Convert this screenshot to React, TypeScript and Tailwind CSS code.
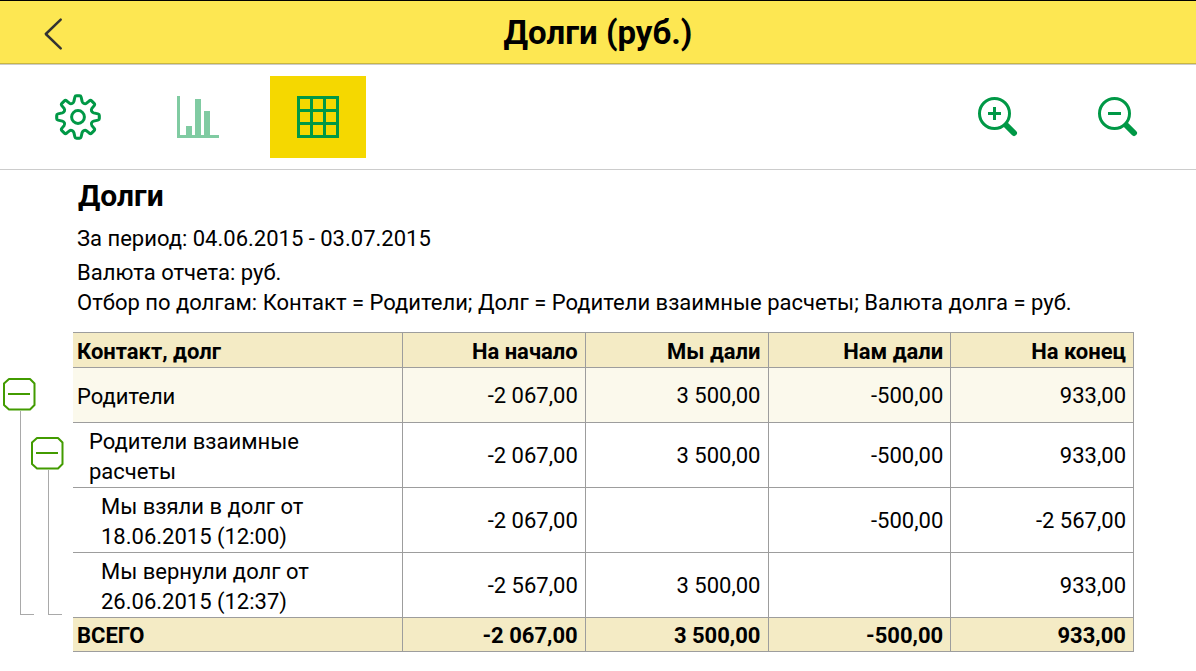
import { useState } from 'react';

type Row = {
  name: string;
  values: string[];
  indent: string;
  height: string;
  background: string;
};

const columns = ['На начало', 'Мы дали', 'Нам дали', 'На конец'];

const rows: Row[] = [
  {
    name: 'Родители',
    values: ['-2 067,00', '3 500,00', '-500,00', '933,00'],
    indent: 'pl-1',
    height: 'h-[55px]',
    background: 'bg-[#fbf9ec]',
  },
  {
    name: 'Родители взаимные расчеты',
    values: ['-2 067,00', '3 500,00', '-500,00', '933,00'],
    indent: 'pl-4 pr-20',
    height: 'h-[65px]',
    background: 'bg-white',
  },
  {
    name: 'Мы взяли в долг от 18.06.2015 (12:00)',
    values: ['-2 067,00', '', '-500,00', '-2 567,00'],
    indent: 'pl-7 pr-20',
    height: 'h-[65px]',
    background: 'bg-white',
  },
  {
    name: 'Мы вернули долг от 26.06.2015 (12:37)',
    values: ['-2 567,00', '3 500,00', '', '933,00'],
    indent: 'pl-7 pr-20',
    height: 'h-[65px]',
    background: 'bg-white',
  },
];

const totals = ['-2 067,00', '3 500,00', '-500,00', '933,00'];

function GearIcon() {
  return (
    <svg width="46" height="46" viewBox="0 0 46 46" fill="none" stroke="#009846" strokeWidth="3" strokeLinejoin="round">
      <circle cx="23" cy="23" r="6.4" />
      {[0, 90, 180, 270].map((angle) => (
        <path
          key={angle}
          transform={`rotate(${angle} 23 23)`}
          d="M23.2 1.7H21.3Q20.2 1.7 19.9 3L18.9 7.4Q18.5 8.8 17.2 9.4Q15.6 10 14.4 9.1L11.6 6.8Q10.4 5.9 9.4 6.9L6.9 9.4Q5.9 10.4 6.8 11.6L9.1 14.4Q10 15.6 9.4 17.2Q8.8 18.5 7.4 18.9L3 19.9Q1.7 20.2 1.7 21.3V23.2"
        />
      ))}
    </svg>
  );
}

function ChartIcon() {
  return (
    <svg width="42" height="42" viewBox="0 0 42 42" fill="#80cba2">
      <path d="M0 0H3V39H9V30H15V39H18V3H24V39H27V15H33V39H42V42H0Z" />
    </svg>
  );
}

function GridIcon() {
  return (
    <svg width="42" height="42" viewBox="0 0 42 42" fill="#009846">
      <path
        fillRule="evenodd"
        d="M0 0H42V42H0ZM3 3V13H13V3ZM16 3V13H26V3ZM29 3V13H39V3ZM3 16V26H13V16ZM16 16V26H26V16ZM29 16V26H39V16ZM3 29V39H13V29ZM16 29V39H26V29ZM29 29V39H39V29Z"
      />
    </svg>
  );
}

function ZoomIcon({ plus }: { plus?: boolean }) {
  return (
    <svg width="40" height="40" viewBox="0 0 40 40" fill="none" stroke="#009846">
      <circle cx="16.5" cy="16.5" r="15" strokeWidth="3" />
      <path d="M28.5 28.5L36 36" strokeWidth="6" strokeLinecap="round" />
      <path d={plus ? 'M10 16.5H23M16.5 10V23' : 'M10 16.5H23'} strokeWidth="3" />
    </svg>
  );
}

function Branch({ label, className }: { label: string; className: string }) {
  return (
    <div className={`flex w-7 flex-col ${className}`}>
      <button type="button" aria-label={label} className="size-[33px] shrink-0">
        <svg width="33" height="33" viewBox="0 0 33 33" fill="none" stroke="#429b00" strokeWidth="2">
          <path d="M6 1H27L31.5 5.5V27L27 31.5H6L1 27V5.5Z" strokeLinejoin="round" />
          <path d="M5 16H27" />
        </svg>
      </button>
      <div className="ml-[17px] w-[14px] grow border-b border-l border-[#a9a9a9]" />
    </div>
  );
}

export default function App() {
  const [view, setView] = useState('table');
  const tool = 'flex h-[82px] w-24 items-center justify-center';
  const cell = 'border-r border-b border-[#9d9d9d] pr-[7px] text-right';
  const head = 'border-t border-r border-b border-[#9d9d9d] bg-[#f4ebc5] font-bold';

  return (
    <div className="min-h-screen bg-white font-['Roboto','Noto_Sans',sans-serif] text-black">
      <header className="flex h-16 items-center border-t border-b border-t-black border-b-[#c9b641] bg-[#fde752]">
        <button type="button" aria-label="Назад" className="flex h-full w-24 items-center pt-1 pl-11">
          <svg width="19" height="34" viewBox="0 0 19 34" fill="none" stroke="#333" strokeWidth="2.5" strokeLinecap="round" strokeLinejoin="round">
            <path d="M16.7 2.7L1.8 17L16.7 31.3" />
          </svg>
        </button>
        <h1 className="grow pt-[2px] text-center text-[33px] leading-10 font-bold">Долги (руб.)</h1>
        <div className="w-24" />
      </header>

      <nav className="flex items-center gap-6 border-t border-b border-[#cccccc] px-[30px] pt-[11px] pb-[11px]">
        <button type="button" aria-label="Настройки" className={tool}>
          <GearIcon />
        </button>
        <button
          type="button"
          aria-label="Диаграмма"
          onClick={() => setView('chart')}
          className={`${tool} ${view === 'chart' ? 'bg-[#f5d800]' : ''}`}
        >
          <ChartIcon />
        </button>
        <button
          type="button"
          aria-label="Таблица"
          onClick={() => setView('table')}
          className={`${tool} ${view === 'table' ? 'bg-[#f5d800]' : ''}`}
        >
          <GridIcon />
        </button>
        <div className="grow" />
        <button type="button" aria-label="Увеличить" className={tool}>
          <ZoomIcon plus />
        </button>
        <button type="button" aria-label="Уменьшить" className={tool}>
          <ZoomIcon />
        </button>
      </nav>

      <main className="pr-[62px] text-[22px] leading-[30px]">
        <section className="pt-2 pb-[14px] pl-[77px]">
          <h2 className="pl-px text-[30px] leading-9 font-bold">Долги</h2>
          <p className="pt-[10px]">За период: 04.06.2015 - 03.07.2015</p>
          <p className="pt-1">Валюта отчета: руб.</p>
          <p>Отбор по долгам: Контакт = Родители; Долг = Родители взаимные расчеты; Валюта долга = руб.</p>
        </section>

        <div className="flex">
          <div className="flex w-[73px] shrink-0 pb-[37px] pl-[3px]">
            <Branch label="Свернуть Родители" className="pt-[46px]" />
            <Branch label="Свернуть Родители взаимные расчеты" className="pt-[105px]" />
          </div>
          <table className="w-full table-fixed border-separate border-spacing-0">
            <thead>
              <tr className="h-9">
                <th scope="col" className={`${head} w-[330px] pt-[3px] pl-1 text-left`}>
                  Контакт, долг
                </th>
                {columns.map((c) => (
                  <th key={c} scope="col" className={`${head} pt-[3px] pr-[7px] text-right`}>
                    {c}
                  </th>
                ))}
              </tr>
            </thead>
            <tbody>
              {rows.map((r) => (
                <tr key={r.name} className={`${r.height} ${r.background}`}>
                  <td className={`border-r border-b border-[#9d9d9d] pt-[3px] ${r.indent}`}>{r.name}</td>
                  {r.values.map((v, i) => (
                    <td key={i} className={`${cell} pt-[2px]`}>
                      {v}
                    </td>
                  ))}
                </tr>
              ))}
            </tbody>
            <tfoot>
              <tr className="h-[34px] bg-[#f4ebc5] font-bold">
                <th scope="row" className="border-r border-b border-[#9d9d9d] pt-[3px] pl-1 text-left">
                  ВСЕГО
                </th>
                {totals.map((v, i) => (
                  <td key={i} className={`${cell} pt-[3px]`}>
                    {v}
                  </td>
                ))}
              </tr>
            </tfoot>
          </table>
        </div>
      </main>
    </div>
  );
}
